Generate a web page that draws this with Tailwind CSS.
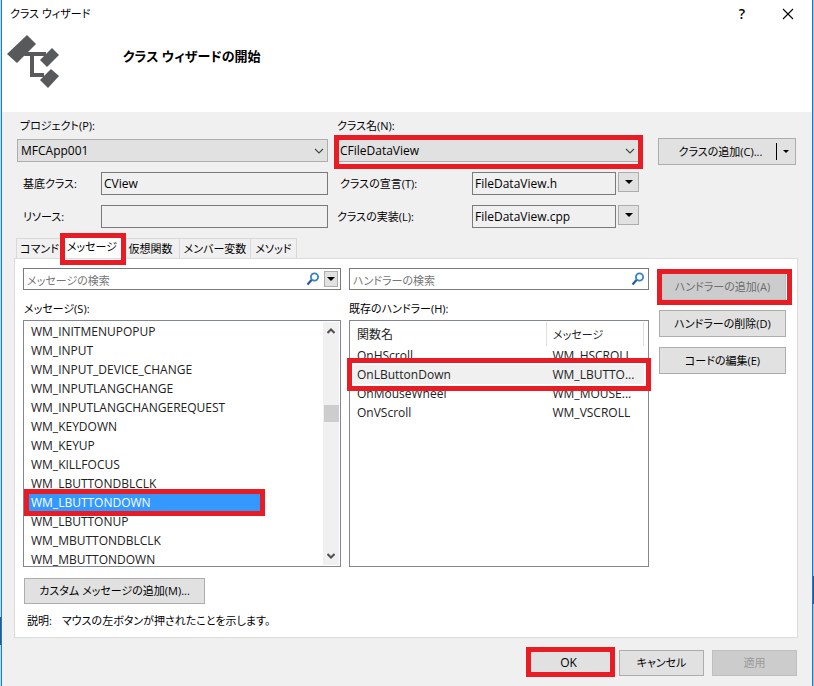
<!DOCTYPE html>
<html lang="ja">
<head>
    <meta charset="UTF-8">
    <meta name="viewport" content="width=device-width, initial-scale=1.0">
    <title>クラス ウィザード</title>
    <script src="https://cdn.jsdelivr.net/npm/@tailwindcss/browser@4"></script>
</head>
<body class="min-h-screen flex font-['Open_Sans','Noto_Sans_CJK_JP',sans-serif] [font-feature-settings:'palt'] text-[11px] leading-4 text-black">
    <!-- desktop behind the dialog, left edge -->
    <div class="w-px bg-[linear-gradient(#a8dcf8_90%,#1d5b9e_90%_94%,#a8dcf8_94%)]"></div>

    <div class="flex-1 min-w-0 flex flex-col bg-[#f0f0f0] border-x border-l-[#2c78b0] border-r-[#1e78c8]">

        <!-- title bar + banner -->
        <header class="bg-white h-28">
            <div class="flex items-center justify-between h-7 pl-2 pr-[18px]">
                <span>クラス ウィザード</span>
                <div class="flex items-center gap-8">
                    <button type="button" aria-label="ヘルプ" class="w-4 text-sm font-semibold">?</button>
                    <button type="button" aria-label="閉じる">
                        <svg class="size-3" viewBox="0 0 12 12" fill="none" stroke="#000" stroke-width="1.1"><path d="M1 1l10 10M11 1L1 11"/></svg>
                    </button>
                </div>
            </div>
            <div class="flex pl-1">
                <svg class="w-14 h-16" viewBox="6 28 56 64" fill="#58595b">
                    <path d="M27 35l9 9-19 19-10-9z"/>
                    <path d="M52 48l7 7-12 12-7-7z"/>
                    <path d="M51 69l8 7-11 12-8-8z"/>
                    <path d="M26 52h20v4H34v17h10v4H30V56h-6z"/>
                </svg>
                <h1 class="pl-[61px] pt-5 text-[13px] leading-4 font-bold">クラス ウィザードの開始</h1>
            </div>
        </header>

        <main class="flex-1 flex flex-col pl-3 pr-[14px] pt-1.5">
            <!-- class settings -->
            <div class="flex gap-[17px] pl-[3px] pr-0.5">
                <div class="flex-1 grid grid-cols-[311fr_304fr] gap-x-[9px]">
                    <div>
                        <label for="project" class="block pl-[3px] h-[21px]">プロジェクト(P):</label>
                        <div class="relative">
                            <select id="project" class="block appearance-none w-full h-[23px] pl-[3px] text-xs bg-[#e1e1e1] border border-[#adadad]"><option>MFCApp001</option></select>
                            <svg class="absolute right-1 top-2 w-[10px] h-2 pointer-events-none" viewBox="0 0 10 8" fill="none" stroke="#444" stroke-width="1.1"><path d="M1 2l4 4 4-4"/></svg>
                        </div>
                    </div>
                    <div>
                        <label for="class" class="block h-[21px]">クラス名(N):</label>
                        <div class="relative">
                            <select id="class" class="block appearance-none w-full h-[23px] pl-[2px] text-xs bg-[#e1e1e1] border border-[#adadad]"><option>CFileDataView</option></select>
                            <svg class="absolute right-1.5 top-2 w-[10px] h-2 pointer-events-none" viewBox="0 0 10 8" fill="none" stroke="#444" stroke-width="1.1"><path d="M1 2l4 4 4-4"/></svg>
                            <span class="absolute -left-[3px] -right-0.5 -top-1 -bottom-[7px] border-[5px] border-[#e81c24] pointer-events-none"></span>
                        </div>
                    </div>
                    <div class="flex items-center pt-[10px]">
                        <label for="base" class="w-[84px] pl-1.5">基底クラス:</label>
                        <input id="base" value="CView" readonly class="flex-1 min-w-0 h-[23px] px-[2px] text-xs bg-[#f0f0f0] border border-[#7a7a7a]">
                    </div>
                    <div class="flex pt-[10px]">
                        <label for="decl" class="flex-1 pl-[3px] leading-[23px]">クラスの宣言(T):</label>
                        <input id="decl" value="FileDataView.h" readonly class="w-[144px] h-[23px] px-[2px] text-xs bg-[#f0f0f0] border border-[#7a7a7a]">
                        <button type="button" aria-label="宣言ファイル" class="mx-0.5 w-[21px] h-5 grid place-items-center bg-[#e1e1e1] border border-[#adadad]">
                            <svg class="w-2 h-1" viewBox="0 0 8 4"><path d="M0 0h8L4 4z"/></svg>
                        </button>
                    </div>
                    <div class="flex items-center pt-[10px]">
                        <label for="resource" class="w-[84px] pl-1.5">リソース:</label>
                        <input id="resource" readonly class="flex-1 min-w-0 h-[23px] px-[2px] text-xs bg-[#f0f0f0] border border-[#7a7a7a]">
                    </div>
                    <div class="flex pt-[10px]">
                        <label for="impl" class="flex-1 leading-[23px]">クラスの実装(L):</label>
                        <input id="impl" value="FileDataView.cpp" readonly class="w-[144px] h-[23px] px-[2px] text-xs bg-[#f0f0f0] border border-[#7a7a7a]">
                        <button type="button" aria-label="実装ファイル" class="mx-0.5 w-[21px] h-5 grid place-items-center bg-[#e1e1e1] border border-[#adadad]">
                            <svg class="w-2 h-1" viewBox="0 0 8 4"><path d="M0 0h8L4 4z"/></svg>
                        </button>
                    </div>
                </div>
                <div class="w-[138px] pt-5">
                    <button type="button" class="flex items-center w-full h-[27px] bg-[#e1e1e1] border border-[#adadad]">
                        <span class="flex-1 pl-1.5">クラスの追加(C)...</span>
                        <span class="h-[17px] w-px bg-black"></span>
                        <svg class="mx-1.5 w-1.5 h-[3px]" viewBox="0 0 6 3"><path d="M0 0h6L3 3z"/></svg>
                    </button>
                </div>
            </div>

            <!-- tabs -->
            <div role="tablist" class="flex items-end h-[30px] pl-[2px]">
                <button role="tab" class="w-[47px] h-5 border border-b-0 border-[#d9d9d9]">コマンド</button>
                <div class="relative w-[58px] h-[22px]">
                    <button role="tab" aria-selected="true" class="w-full h-full bg-white">メッセージ</button>
                    <span class="absolute -left-[3px] -right-[5px] -top-[3px] -bottom-[7px] z-10 border-[5px] border-[#e81c24] pointer-events-none"></span>
                </div>
                <button role="tab" class="w-[59px] h-5 border border-b-0 border-[#d9d9d9]">仮想関数</button>
                <button role="tab" class="w-[71px] h-5 border border-b-0 border-l-0 border-[#d9d9d9]">メンバー変数</button>
                <button role="tab" class="w-[46px] h-5 border border-b-0 border-l-0 border-[#d9d9d9]">メソッド</button>
            </div>
            <section class="bg-white border border-[#dcdcdc] h-[380px] px-2 pt-[9px]">
                <div class="flex">
                    <div class="flex-1 grid grid-cols-[318fr_300fr] gap-x-2">
                        <div class="flex items-center h-[22px] border border-[#7a7a7a] pl-[3px] pr-[2px]">
                            <input type="text" aria-label="メッセージの検索" placeholder="メッセージの検索" class="flex-1 min-w-0 pt-1 outline-none placeholder:text-[#757575]">
                            <svg class="size-[14px]" viewBox="0 0 14 14" fill="none"><path d="M1.500 12.500l4.500-5" stroke="#2a55a0" stroke-width="2.200"/><circle cx="8.500" cy="5" r="3.600" stroke="#3384c4" stroke-width="1.800"/></svg>
                            <button type="button" aria-label="検索オプション" class="ml-1 w-[14px] h-4 grid place-items-center bg-[#e1e1e1] border border-[#adadad]">
                                <svg class="w-2 h-1" viewBox="0 0 8 4"><path d="M0 0h8L4 4z"/></svg>
                            </button>
                        </div>
                        <div class="flex items-center h-[22px] border border-[#7a7a7a] pl-[3px] pr-[3px]">
                            <input type="text" aria-label="ハンドラーの検索" placeholder="ハンドラーの検索" class="flex-1 min-w-0 pt-1 outline-none placeholder:text-[#757575]">
                            <svg class="size-[14px]" viewBox="0 0 14 14" fill="none"><path d="M1.500 12.500l4.500-5" stroke="#2a55a0" stroke-width="2.200"/><circle cx="8.500" cy="5" r="3.600" stroke="#3384c4" stroke-width="1.800"/></svg>
                        </div>

                        <h2 id="messages" class="h-[30px] pt-[11px] pl-px">メッセージ(S):</h2>
                        <h2 id="handlers" class="h-[30px] pt-[11px]">既存のハンドラー(H):</h2>

                        <div class="flex h-[247px] border border-[#828790] overflow-hidden">
                            <ul role="listbox" aria-labelledby="messages" class="flex-1 pt-px pl-1 text-xs leading-[19px] text-[#222]">
                                <li role="option" class="h-[19px] pl-[3px]">WM_INITMENUPOPUP</li>
                                <li role="option" class="h-[19px] pl-[3px]">WM_INPUT</li>
                                <li role="option" class="h-[19px] pl-[3px]">WM_INPUT_DEVICE_CHANGE</li>
                                <li role="option" class="h-[19px] pl-[3px]">WM_INPUTLANGCHANGE</li>
                                <li role="option" class="h-[19px] pl-[3px]">WM_INPUTLANGCHANGEREQUEST</li>
                                <li role="option" class="h-[19px] pl-[3px]">WM_KEYDOWN</li>
                                <li role="option" class="h-[19px] pl-[3px]">WM_KEYUP</li>
                                <li role="option" class="h-[19px] pl-[3px]">WM_KILLFOCUS</li>
                                <li role="option" class="h-[19px] pl-[3px]">WM_LBUTTONDBLCLK</li>
                                <li role="option" aria-selected="true" class="relative h-[19px] w-[233px] pl-[3px] bg-[#3399ff] text-white font-medium">WM_LBUTTONDOWN
                                    <span class="absolute -inset-x-1 -inset-y-1 border-[5px] border-[#e81c24] pointer-events-none"></span>
                                </li>
                                <li role="option" class="h-[19px] pl-[3px]">WM_LBUTTONUP</li>
                                <li role="option" class="h-[19px] pl-[3px]">WM_MBUTTONDBLCLK</li>
                                <li role="option" class="h-[19px] pl-[3px]">WM_MBUTTONDOWN</li>
                            </ul>
                            <div class="w-4 my-px mr-px bg-[#f0f0f0] flex flex-col items-center justify-between py-1.5">
                                <svg class="w-2 h-1.5" viewBox="0 0 8 6" fill="none" stroke="#505050" stroke-width="2"><path d="M.5 5L4 1.500 7.500 5"/></svg>
                                <div class="flex-1 pt-[71px]"><div class="w-[15px] h-[17px] bg-[#cdcdcd]"></div></div>
                                <svg class="w-2 h-1.5" viewBox="0 0 8 6" fill="none" stroke="#505050" stroke-width="2"><path d="M.5 1L4 4.500 7.500 1"/></svg>
                            </div>
                        </div>

                        <div class="border border-[#828790] pl-[3px] pr-1 pt-px">
                            <table aria-labelledby="handlers" class="w-full table-fixed text-left text-xs leading-[19px] text-[#222]">
                                <thead>
                                    <tr class="h-6">
                                        <th class="font-normal pl-1 border-r border-[#e0e0e0]">関数名</th>
                                        <th class="w-[97px] font-normal pl-1.5 border-r border-[#e0e0e0] text-[11px]">メッセージ</th>
                                    </tr>
                                </thead>
                                <tbody>
                                    <tr class="h-[19px]"><td class="pl-1">OnHScroll</td><td class="pl-1.5">WM_HSCROLL</td></tr>
                                    <tr class="relative h-[19px] bg-[#f0f0f0]">
                                        <td class="pl-1">OnLButtonDown<span class="absolute -left-1.5 -right-[7px] -inset-y-[7px] border-[5px] border-[#e81c24] pointer-events-none"></span></td>
                                        <td class="pl-1.5">WM_LBUTTO...</td>
                                    </tr>
                                    <tr class="h-[19px]"><td class="pl-1">OnMouseWheel</td><td class="pl-1.5">WM_MOUSE...</td></tr>
                                    <tr class="h-[19px]"><td class="pl-1">OnVScroll</td><td class="pl-1.5">WM_VSCROLL</td></tr>
                                </tbody>
                            </table>
                        </div>
                    </div>
                    <div class="w-[140px] pl-[10px] pr-[3px] pt-[5px] flex flex-col gap-[10px]">
                        <div class="relative">
                            <button type="button" disabled class="block w-full h-[27px] bg-[#cccccc] border border-[#bfbfbf] text-[#6d6d6d]">ハンドラーの追加(A)</button>
                            <span class="absolute -left-0.5 -right-1.5 -top-1 -bottom-[5px] border-[5px] border-[#e81c24] pointer-events-none"></span>
                        </div>
                        <button type="button" class="h-[27px] bg-[#e1e1e1] border border-[#adadad]">ハンドラーの削除(D)</button>
                        <button type="button" class="h-[27px] bg-[#e1e1e1] border border-[#adadad]">コードの編集(E)</button>
                    </div>
                </div>
                <button type="button" class="block mt-[11px] ml-px w-[181px] h-[26px] bg-[#e1e1e1] border border-[#adadad]">カスタム メッセージの追加(M)...</button>
                <p class="flex gap-[10px] pt-[9px] pl-1"><span>説明:</span><span>マウスの左ボタンが押されたことを示します。</span></p>
            </section>

            <!-- footer -->
            <footer class="flex justify-end gap-2 pt-3 pb-[10px] pr-px">
                <div class="relative w-[81px]">
                    <button type="button" class="block w-full h-[26px] pr-1 text-xs bg-[#e1e1e1] border border-[#0078d7]">OK</button>
                    <span class="absolute -inset-x-1 -top-[3px] -bottom-[1px] border-[5px] border-[#e81c24] pointer-events-none"></span>
                </div>
                <button type="button" class="w-[85px] h-[26px] bg-[#e1e1e1] border border-[#adadad]">キャンセル</button>
                <button type="button" disabled class="w-[85px] h-[26px] bg-[#cccccc] border border-[#bfbfbf] text-[#9a9a9a]">適用</button>
            </footer>
        </main>
    </div>

    <!-- desktop behind the dialog, right edge -->
    <div class="w-px bg-[linear-gradient(#8fcbf5_84%,#1d5b9e_84%_88%,#8fc4f0_88%)]"></div>
</body>
</html>
